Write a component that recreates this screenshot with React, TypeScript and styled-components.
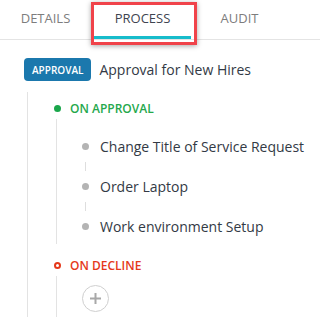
import React from 'react'
import styled, { createGlobalStyle } from 'styled-components'

const GlobalStyle = createGlobalStyle`
  body {
    margin: 0;
    background: #ffffff;
    font-family: 'Open Sans', 'Liberation Sans', sans-serif;
  }
`

const Page = styled.div`
  position: relative;
  width: 320px;
  height: 326px;
  overflow: hidden;
  background: #ffffff;
`

const TabBar = styled.div`
  display: flex;
  height: 39px;
  border-bottom: 1px solid #e4e4e4;
`

const Tab = styled.div<{ $active?: boolean }>`
  display: flex;
  align-items: center;
  justify-content: center;
  width: 97px;
  height: 36px;
  font-size: 13px;
  color: ${({ $active }) => ($active ? '#3e4450' : '#7d7d7d')};
  border-bottom: 3px solid ${({ $active }) => ($active ? '#17bccb' : 'transparent')};

  &:first-child {
    margin-left: -3px;
  }
`

// annotation box lying over the active tab
const Highlight = styled.div`
  position: absolute;
  left: 91px;
  top: 2px;
  width: 100px;
  height: 37px;
  border: 3px solid #f0434a;
  box-shadow: 0 1px 5px rgba(0, 0, 0, 0.35);
  pointer-events: none;
`

const Content = styled.div`
  padding: 18px 0 0 24px;
`

const Header = styled.div`
  display: flex;
  align-items: center;
  gap: 8px;
`

const Badge = styled.span`
  display: inline-flex;
  align-items: center;
  height: 23px;
  padding: 0 8px;
  border-radius: 4px;
  background: #1b78ad;
  color: #ffffff;
  font-size: 10px;
  font-weight: 600;
`

const Title = styled.span`
  font-size: 14px;
  color: #333a45;
`

const Tree = styled.div`
  margin-top: 11px;
  margin-left: 3px;
  border-left: 1px solid #e3e3e3;
  padding: 5px 0 0 26px;
`

const BranchHeader = styled.div<{ $color: string; $spaced?: boolean }>`
  display: flex;
  align-items: center;
  gap: 9px;
  height: 22px;
  margin-top: ${({ $spaced }) => ($spaced ? '10px' : '0')};
  font-size: 12px;
  font-weight: 600;
  color: ${({ $color }) => $color};
`

const Dot = styled.span<{ $color: string; $ring?: boolean }>`
  width: 7px;
  height: 7px;
  border-radius: 50%;
  box-sizing: border-box;
  background: ${({ $ring, $color }) => ($ring ? 'transparent' : $color)};
  border: ${({ $ring, $color }) => ($ring ? `2px solid ${$color}` : 'none')};
`

const SubTree = styled.div<{ $top: number; $bottom: number }>`
  margin-left: 2px;
  border-left: 1px solid #e3e3e3;
  padding: ${({ $top, $bottom }) => `${$top}px 0 ${$bottom}px 25px`};
`

const Item = styled.div`
  display: flex;
  align-items: center;
  gap: 11px;
  height: 24px;
  font-size: 14px;
  color: #333a45;
`

const ItemDot = styled.span`
  width: 7px;
  height: 7px;
  border-radius: 50%;
  background: #b4b4b4;
`

const Connector = styled.div`
  height: 16px;
  display: flex;
  align-items: center;
  padding-left: 3px;

  &::before {
    content: '';
    width: 1px;
    height: 9px;
    background: #dedede;
  }
`

const AddButton = styled.div`
  width: 27px;
  height: 27px;
  box-sizing: border-box;
  border-radius: 50%;
  border: 1px solid #cfcfcf;
  display: flex;
  align-items: center;
  justify-content: center;
`

const items = ['Change Title of Service Request', 'Order Laptop', 'Work environment Setup']

export default function App() {
  return (
    <Page>
      <GlobalStyle />
      <TabBar>
        <Tab>DETAILS</Tab>
        <Tab $active>PROCESS</Tab>
        <Tab>AUDIT</Tab>
      </TabBar>
      <Highlight />
      <Content>
        <Header>
          <Badge>APPROVAL</Badge>
          <Title>Approval for New Hires</Title>
        </Header>
        <Tree>
          <BranchHeader $color="#25a84c">
            <Dot $color="#1aa64b" />
            ON APPROVAL
          </BranchHeader>
          <SubTree $top={15} $bottom={6}>
            {items.map((text, i) => (
              <React.Fragment key={text}>
                {i > 0 && <Connector />}
                <Item>
                  <ItemDot />
                  {text}
                </Item>
              </React.Fragment>
            ))}
          </SubTree>
          <BranchHeader $color="#e5391b" $spaced>
            <Dot $color="#e5391b" $ring />
            ON DECLINE
          </BranchHeader>
          <SubTree $top={9} $bottom={5}>
            <AddButton>
              <svg width="13" height="13" viewBox="0 0 13 13">
                <path d="M6.5 1v11M1 6.5h11" stroke="#a8a8a8" strokeWidth="2" />
              </svg>
            </AddButton>
          </SubTree>
        </Tree>
      </Content>
    </Page>
  )
}
